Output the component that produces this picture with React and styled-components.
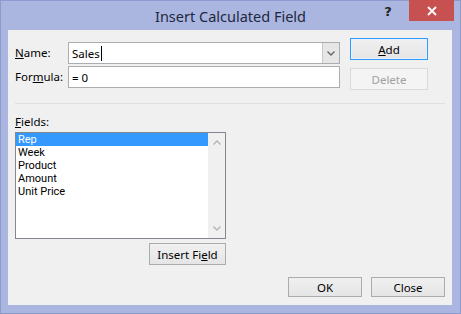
import React from 'react'
import styled, { createGlobalStyle } from 'styled-components'

const GlobalStyle = createGlobalStyle`
  html, body {
    margin: 0;
    padding: 0;
    background: #ffffff;
  }
  body {
    font-family: "Noto Sans", "DejaVu Sans", sans-serif;
    font-size: 12px;
    color: #000;
  }
`

const fields = ['Rep', 'Week', 'Product', 'Amount', 'Unit Price']

function Chevron({ up, color = '#555' }) {
  return (
    <svg width="8" height="5" viewBox="0 0 8 5">
      <polyline
        points={up ? '0.5,4.5 4,1 7.5,4.5' : '0.5,0.5 4,4 7.5,0.5'}
        fill="none"
        stroke={color}
        strokeWidth="1.4"
      />
    </svg>
  )
}

export default function App() {
  return (
    <>
      <GlobalStyle />
      <Window>
        <TitleBar>
          <span />
          <Title>Insert Calculated Field</Title>
          <TitleControls>
            <Help>?</Help>
            <CloseBtn>
              <svg width="10" height="10" viewBox="0 0 10 10">
                <path d="M1 1 L9 9 M9 1 L1 9" stroke="#fff" strokeWidth="1.8" />
              </svg>
            </CloseBtn>
          </TitleControls>
        </TitleBar>

        <Body>
          <TopSection>
            <FormGrid>
              <Label><u>N</u>ame:</Label>
              <Combo>
                <FieldText>
                  Sales<Caret />
                </FieldText>
                <DropArrow>
                  <Chevron color="#666" />
                </DropArrow>
              </Combo>
              <Label>For<u>m</u>ula:</Label>
              <TextBox>
                <FieldText>= 0</FieldText>
              </TextBox>
            </FormGrid>
            <SideButtons>
              <Button $focused><u>A</u>dd</Button>
              <Button disabled>Delete</Button>
            </SideButtons>
          </TopSection>

          <Separator />

          <FieldsLabel><u>F</u>ields:</FieldsLabel>
          <ListBox>
            <Items>
              {fields.map((f, i) => (
                <Item key={f} $selected={i === 0}>{f}</Item>
              ))}
            </Items>
            <ScrollBar>
              <Chevron up color="#b5b5b5" />
              <Chevron color="#b5b5b5" />
            </ScrollBar>
          </ListBox>
          <InsertRow>
            <Button $w={77}>Insert Fi<u>e</u>ld</Button>
          </InsertRow>

          <Footer>
            <Button $w={74} $h={20}>OK</Button>
            <Button $w={74} $h={20}>Close</Button>
          </Footer>
        </Body>
      </Window>
    </>
  )
}

const Window = styled.div`
  box-sizing: border-box;
  width: 461px;
  height: 314px;
  background: #aab6e0;
  border: 1px solid #8d9ace;
  display: flex;
  flex-direction: column;
`

const TitleBar = styled.div`
  height: 29px;
  display: grid;
  grid-template-columns: 1fr auto 1fr;
  align-items: start;
`

const Title = styled.div`
  margin-top: 6px;
  font-size: 14.5px;
  line-height: 18px;
  color: #1d2840;
`

const TitleControls = styled.div`
  justify-self: end;
  display: flex;
  align-items: flex-start;
  margin-right: 6px;
  margin-top: -1px;
`

const Help = styled.div`
  width: 14px;
  margin-right: 14px;
  margin-top: 4px;
  font-family: "DejaVu Sans", sans-serif;
  font-weight: bold;
  font-size: 13px;
  line-height: 16px;
  color: #222;
  text-align: center;
`

const CloseBtn = styled.div`
  width: 45px;
  height: 21px;
  background: #c75050;
  display: flex;
  align-items: center;
  justify-content: center;
`

const Body = styled.div`
  flex: 1;
  margin: 0 8px 8px 7px;
  background: #f0f0f0;
  padding: 8px 7px 8px 7px;
  display: flex;
  flex-direction: column;
`

const TopSection = styled.div`
  display: flex;
  align-items: flex-start;
  gap: 10px;
`

const FormGrid = styled.div`
  margin-top: 4px;
  display: grid;
  grid-template-columns: 53px 272px;
  grid-auto-rows: 22px;
  row-gap: 2px;
  align-items: center;
`

const Label = styled.div`
  font-size: 11.5px;
  line-height: 16px;
  color: #000;
`

const Combo = styled.div`
  box-sizing: border-box;
  height: 22px;
  border: 1px solid #abadb3;
  background: #fff;
  display: flex;
`

const TextBox = styled(Combo)``

const FieldText = styled.div`
  flex: 1;
  display: flex;
  align-items: center;
  padding-left: 3px;
  font-size: 11.5px;
  color: #000;
`

const Caret = styled.span`
  display: inline-block;
  width: 1px;
  height: 15px;
  background: #000;
  margin-left: 1px;
`

const DropArrow = styled.div`
  width: 16px;
  background: #e6e6e6;
  border-left: 1px solid #c8c8c8;
  display: flex;
  align-items: center;
  justify-content: center;
`

const SideButtons = styled.div`
  display: flex;
  flex-direction: column;
  gap: 8px;
`

const Button = styled.button`
  box-sizing: border-box;
  width: ${p => (p.$w ? `${p.$w}px` : '78px')};
  height: ${p => (p.$h ? `${p.$h}px` : '22px')};
  padding: 0;
  font-family: "Noto Sans", "DejaVu Sans", sans-serif;
  font-size: 11.5px;
  color: #000;
  background: linear-gradient(#f0f0f0, #e5e5e5);
  border: 1px solid ${p => (p.$focused ? '#3399ff' : '#acacac')};
  box-shadow: ${p => (p.$focused ? 'inset 0 0 0 1px #e5f1fb' : 'none')};
  border-radius: 0;

  &:disabled {
    color: #a0a0a0;
    background: #f4f4f4;
    border-color: #dadada;
  }
`

const Separator = styled.div`
  height: 1px;
  background: #e0e0e0;
  margin-top: 13px;
`

const FieldsLabel = styled(Label)`
  margin-top: 10px;
`

const ListBox = styled.div`
  box-sizing: border-box;
  margin-top: 2px;
  width: 211px;
  height: 107px;
  border: 1px solid #828790;
  background: #fff;
  display: flex;
`

const Items = styled.div`
  flex: 1;
  display: flex;
  flex-direction: column;
`

const Item = styled.div`
  height: 13px;
  line-height: 13px;
  padding-left: 2px;
  font-family: Roboto, "Noto Sans", sans-serif;
  font-size: 11px;
  color: ${p => (p.$selected ? '#fff' : '#000')};
  background: ${p => (p.$selected ? '#3399ff' : 'transparent')};
`

const ScrollBar = styled.div`
  width: 17px;
  background: #f0f0f0;
  display: flex;
  flex-direction: column;
  align-items: center;
  justify-content: space-between;
  padding: 7px 0 7px;
`

const InsertRow = styled.div`
  width: 211px;
  margin-top: 4px;
  display: flex;
  justify-content: flex-end;
`

const Footer = styled.div`
  margin-top: auto;
  display: flex;
  justify-content: flex-end;
  gap: 9px;
`
